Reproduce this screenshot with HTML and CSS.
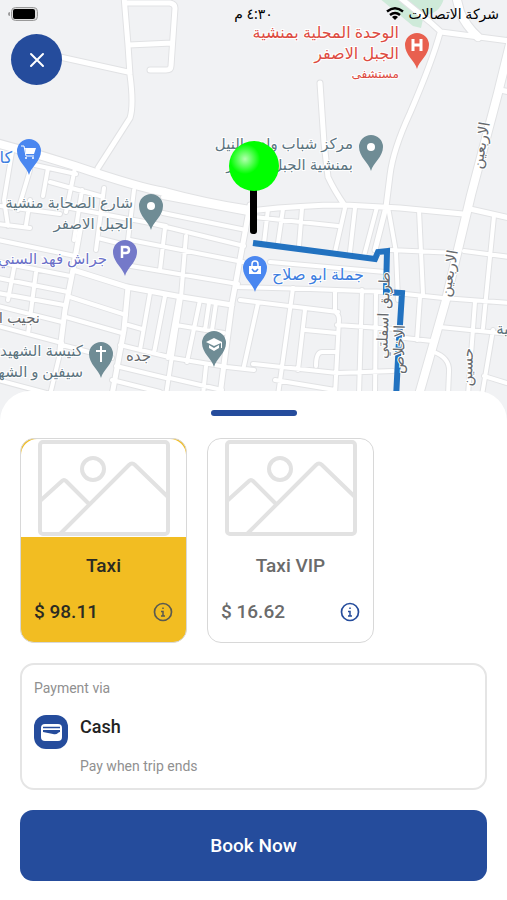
FILE: index.html
```html
<!DOCTYPE html>
<html lang="en">
<head>
    <meta charset="UTF-8">
    <meta name="viewport" content="width=device-width, initial-scale=1.0">
    <title>Book a taxi</title>
    <link rel="stylesheet" href="styles.css">
</head>

<body>
    <main class="screen">
        <section class="map">
            <svg class="map-canvas" viewBox="0 0 507 430" preserveAspectRatio="xMidYMin slice" role="img" aria-label="Map">
                <defs>
                    <path id="streets" d="M283 209L278 243M302 208L299 246M253 217L338 226M345 208L335 252M355 208L350 252M377 207L364 256
                        M388 207L396 252L398 300M419 210L423 294M390 250L456 253M464 251L510 257M494 216L483 328
                        M396 293L443 298L510 303M235 287L310 289L390 292M240 300L338 312M335 290L335 312Q339 314 339 320L335 395
                        M270 262L385 272M293 288L278 395M258 303L244 366M305 310L298 370M305 330L337 333M337 325L395 329
                        M362 290L359 395M376 292L375 395M253 364L337 373L393 371M275 380L335 390M316 366Q316 352 322 352L335 352
                        M420 297L417 340M396 337L432 341M440 327L510 334M475 302L468 395M434 352Q450 358 449 372L448 395M493 330L482 395M484 376L510 384
                        M163 197L248 213M163 213L246 230M150 223L244 246M130 240L243 262M125 265L238 284
                        M186 236L181 297L166 395M165 228L160 270M150 293L140 350M165 296L154 353M179 297L168 358M200 300L187 362
                        M209 303L205 330M216 303L212 330M128 325L142 329M176 325L224 333M120 345L173 358L227 367L254 370
                        M70 297L126 315M66 317L122 333M62 345L112 358M116 366L166 378M112 380L160 392M206 366L203 395M170 378L222 390
                        M-2 262L70 276M-2 278L68 292M-2 293L64 305M-2 326L62 343M36 272L28 334M14 268L8 300M-2 306L62 322M62 345L50 395M-2 380L50 394
                        M-2 224L30 228M-2 240L75 256M12 152L4 200L8 226M30 170L18 210M48 168L43 196M75 168L66 212M35 165L76 174M50 182L100 196
                        M30 200L26 225M60 206L166 226M82 190L74 240M104 188L96 250M134 190L128 240M98 238L130 246M0 206L60 214M268 209L264 243"/>
                    <path id="roads" d="M124 -4L128 45L130 75Q134 105 130 118L98 168M125 3L170 3Q175 4 175 8L171 66Q171 70 166 70L150 70M129 45L172 43
                        M60 57L128 72M320 83L324 143L328 177Q334 190 345 206M398 -4L430 22L441 32L510 41M440 33Q432 62 410 113Q393 150 390 175L386 207L375 250
                        M500 90L510 92M250 211Q300 205 345 205L400 208L463 214M470 209L510 218
                        M250 205L232 303L220 395M73 270L127 287L182 297L232 305M128 287L124 330L112 395M80 230L72 275L65 310L60 350"/>
                    <path id="avenues" d="M-4 143Q35 153 75 166Q140 188 165 192Q205 203 250 210M456 -4L460 12Q466 26 478 37M512 36L498 93L471 195L446 300L418 398"/>
                    <path id="pin" d="M0 24C-2 16 -12 10 -12 0A12 12 0 1 1 12 0C12 10 2 16 0 24Z"/>
                    <radialGradient id="ball" cx="0.32" cy="0.36" r="0.3">
                        <stop offset="0" stop-color="#b4ffb0"/>
                        <stop offset="1" stop-color="#00ff00"/>
                    </radialGradient>
                </defs>

                <!-- park -->
                <path class="park" d="M379 -2H444Q440 14 424 15L421 28L413 26Z"/>

                <!-- roads: the edges first, then the white fill -->
                <g class="edge">
                    <use href="#streets" stroke-width="6"/>
                    <use href="#roads" stroke-width="7"/>
                    <use href="#avenues" stroke-width="10"/>
                </g>
                <g class="fill">
                    <use href="#streets" stroke-width="4"/>
                    <use href="#roads" stroke-width="5"/>
                    <use href="#avenues" stroke-width="8"/>
                </g>

                <polyline class="route" points="253,243 375,259 378,252 387,251 386,292 402,293 399,340 396,398"/>

                <g class="label red">
                    <text x="399" y="38">الوحدة المحلية بمنشية</text>
                    <text x="399" y="59">الجبل الاصفر</text>
                    <text class="small" x="399" y="78">مستشفى</text>
                </g>
                <g class="label gray">
                    <text x="353" y="149">مركز شباب وادي النيل</text>
                    <text x="353" y="170">بمنشية الجبل الاصفر</text>
                    <text x="133" y="208">شارع الصحابة منشية</text>
                    <text x="133" y="229">الجبل الاصفر</text>
                    <text x="83" y="356">كنيسة الشهيد</text>
                    <text x="83" y="377">سيفين و الشهيد</text>
                    <text x="513" y="334">نية</text>
                </g>
                <g class="label blue">
                    <text x="12" y="163">كا</text>
                    <text x="364" y="280">جملة ابو صلاح</text>
                </g>
                <text class="label purple" x="107" y="264">جراش فهد السني</text>
                <g class="label street">
                    <text x="40" y="323">نجيب ا</text>
                    <text x="151" y="361">جده</text>
                    <text transform="translate(490 123) rotate(-80)">الاربعين</text>
                    <text transform="translate(458 251) rotate(-80)">الاربعين</text>
                    <text transform="translate(390 272) rotate(-88)">طريق اسفلتي</text>
                    <text transform="translate(405 325) rotate(-88)">الاخلاص</text>
                    <text transform="translate(473 348) rotate(-88)">حسين</text>
                </g>

                <g transform="translate(417 45)">
                    <use href="#pin" fill="#e8604f"/>
                    <path class="glyph" stroke-width="3" d="M-4 -6V6M4 -6V6M-4 0H4"/>
                </g>
                <g transform="translate(371 147)">
                    <use href="#pin" fill="#6f8c95"/>
                    <circle r="4" fill="#fff"/>
                </g>
                <g transform="translate(151 206)">
                    <use href="#pin" fill="#6f8c95"/>
                    <circle r="4" fill="#fff"/>
                </g>
                <g transform="translate(29 151)">
                    <use href="#pin" fill="#4a87f0"/>
                    <path d="M-4 -3H7L5 3H-3Z" fill="#fff"/>
                    <path class="glyph" stroke-width="1" d="M-8 -5H-5L-3 5H5"/>
                    <circle cx="-3" cy="7" r="1" fill="#fff"/>
                    <circle cx="4" cy="7" r="1" fill="#fff"/>
                </g>
                <g transform="translate(125 252)">
                    <use href="#pin" fill="#7479c9"/>
                    <path class="glyph" stroke-width="2.5" d="M-3 6V-5H1Q4 -5 4 -2T1 1H-3"/>
                </g>
                <g transform="translate(255 268)">
                    <use href="#pin" fill="#4a87f0"/>
                    <path d="M-6 -2H6V6H-6Z" fill="#fff"/>
                    <path class="glyph" stroke-width="1.5" d="M-3 -2V-4Q-3 -7 0 -7T3 -4V-2"/>
                    <path d="M-3 1Q0 6 3 1" fill="none" stroke="#4a87f0" stroke-width="1.5"/>
                </g>
                <g transform="translate(214 343)">
                    <use href="#pin" fill="#6f8c95"/>
                    <path d="M-8 -1L0 -5L8 -1V5H7V0L0 3ZM-5 2L0 5L5 2V5L0 8L-5 5Z" fill="#fff"/>
                </g>
                <g transform="translate(101 354)">
                    <use href="#pin" fill="#6f8c95"/>
                    <path class="glyph" stroke-width="2" d="M0 -8V8M-5 -3H5"/>
                </g>

                <!-- pickup marker -->
                <rect x="250" y="186" width="7" height="48" rx="3"/>
                <circle cx="254" cy="166" r="25" fill="url(#ball)"/>
            </svg>

            <header class="status-bar" dir="rtl" lang="ar">
                <span class="carrier">
                    شركة الاتصالات
                    <svg width="18" height="13" viewBox="0 0 18 13" aria-hidden="true">
                        <path d="M1 4.5Q9 -2 17 4.5M4 8Q9 3.800 14 8" fill="none" stroke="#000" stroke-width="2.400"/>
                        <path d="M6 10Q9 7.500 12 10L9 13Z"/>
                    </svg>
                </span>
                <span class="time">٤:٣٠ م</span>
                <span class="battery">
                    <svg width="30" height="14" viewBox="0 0 30 14" aria-hidden="true">
                        <rect x="3.500" y="0.500" width="26" height="13" rx="4" fill="#ddd" stroke="#999"/>
                        <rect x="5" y="2" width="22" height="10" rx="2"/>
                        <path d="M2 5V9Q0 9 0 7T2 5Z" fill="#999"/>
                    </svg>
                </span>
            </header>

            <button class="close" type="button" aria-label="Close">
                <svg width="16" height="16" viewBox="0 0 16 16" aria-hidden="true">
                    <path d="M2 2L14 14M14 2L2 14" stroke="#fff" stroke-width="2" stroke-linecap="round"/>
                </svg>
            </button>
        </section>

        <form class="sheet">
            <div class="handle"></div>

            <div class="cars">
                <div class="car selected">
                    <input class="car-radio" type="radio" name="car" id="taxi" checked>
                    <label class="car-label" for="taxi">
                        <span class="car-picture">
                            <svg width="132" height="98" viewBox="0 0 132 98" aria-hidden="true">
                                <rect x="2" y="3" width="128" height="92" rx="3"/>
                                <circle cx="55" cy="30" r="11"/>
                                <path d="M2 62L24 42Q26 40 28 42L51 65M22 95L91 26Q94 23 97 26L130 58"/>
                            </svg>
                        </span>
                        <span class="car-name">Taxi</span>
                    </label>
                    <div class="car-price">
                        <span>$ 98.11</span>
                        <button class="info" type="button" aria-label="About Taxi">
                            <svg width="20" height="20" viewBox="0 0 20 20" aria-hidden="true">
                                <circle cx="10" cy="10" r="8.500" stroke-width="1.700"/>
                                <path d="M8 9.500H10V14M8 14H12M10 5.500V7" stroke-width="1.500"/>
                            </svg>
                        </button>
                    </div>
                </div>

                <div class="car">
                    <input class="car-radio" type="radio" name="car" id="taxi-vip">
                    <label class="car-label" for="taxi-vip">
                        <span class="car-picture">
                            <svg width="132" height="98" viewBox="0 0 132 98" aria-hidden="true">
                                <rect x="2" y="3" width="128" height="92" rx="3"/>
                                <circle cx="55" cy="30" r="11"/>
                                <path d="M2 62L24 42Q26 40 28 42L51 65M22 95L91 26Q94 23 97 26L130 58"/>
                            </svg>
                        </span>
                        <span class="car-name">Taxi VIP</span>
                    </label>
                    <div class="car-price">
                        <span>$ 16.62</span>
                        <button class="info" type="button" aria-label="About Taxi VIP">
                            <svg width="20" height="20" viewBox="0 0 20 20" aria-hidden="true">
                                <circle cx="10" cy="10" r="8.500" stroke-width="1.700"/>
                                <path d="M8 9.500H10V14M8 14H12M10 5.500V7" stroke-width="1.500"/>
                            </svg>
                        </button>
                    </div>
                </div>
            </div>

            <section class="payment">
                <p class="payment-title">Payment via</p>
                <div class="payment-row">
                    <svg class="payment-icon" width="34" height="34" viewBox="0 0 34 34" aria-hidden="true">
                        <rect width="34" height="34" rx="12" fill="#254c9c"/>
                        <rect x="7" y="9" width="21" height="17" rx="4" fill="#fff"/>
                        <path d="M9 12.500H26" stroke="#254c9c" stroke-width="1.500"/>
                        <path d="M9 15H26V17Q25 17 24 18Q22 20 19 19L9 17Z" fill="#254c9c"/>
                    </svg>
                    <div>
                        <h2 class="payment-name">Cash</h2>
                        <p class="payment-note">Pay when trip ends</p>
                    </div>
                </div>
            </section>

            <button class="book" type="button">Book Now</button>
        </form>
    </main>
</body>
</html>
```

FILE: styles.css
```css
* {
    box-sizing: border-box;
}

body {
    margin: 0;
    font-family: Roboto, "Noto Sans", sans-serif;
    background-color: #fff;
}

.screen {
    position: relative;
}

/* map */
.map {
    height: 430px;
    background-color: #f1f2f4;
}

.map-canvas {
    display: block;
    width: 100%;
    height: 100%;
}

.park {
    fill: #ceead9;
}

.edge,
.fill {
    fill: none;
    stroke-linecap: round;
    stroke-linejoin: round;
}

.edge {
    stroke: #e1e2e4;
}

.fill {
    stroke: #fff;
}

.route {
    fill: none;
    stroke: #2272c0;
    stroke-width: 6px;
}

.glyph {
    fill: none;
    stroke: #fff;
}

.label {
    direction: rtl;
    font-family: "Noto Sans", "DejaVu Sans", sans-serif;
    font-size: 15px;
    paint-order: stroke;
    stroke: #fff;
    stroke-width: 2px;
}

.red {
    fill: #dd4b41;
    font-size: 16px;
}

.small {
    font-size: 12px;
}

.gray {
    fill: #5c7480;
}

.blue {
    fill: #3c7de0;
    font-size: 16px;
}

.purple {
    fill: #6a6fc8;
}

.street {
    fill: #66696d;
}

.status-bar {
    position: absolute;
    top: 0;
    left: 0;
    right: 0;
    display: grid;
    grid-template-columns: 1fr auto 1fr;
    align-items: center;
    height: 27px;
    padding: 0 8px;
    font-family: "Noto Sans", "DejaVu Sans", sans-serif;
    font-size: 14px;
}

.carrier {
    display: flex;
    align-items: center;
    gap: 4px;
}

.battery {
    display: flex;
    justify-content: flex-end;
}

.close {
    position: absolute;
    top: 34px;
    left: 11px;
    display: flex;
    align-items: center;
    justify-content: center;
    width: 51px;
    height: 51px;
    padding: 0;
    border: none;
    border-radius: 50%;
    background-color: #254c9c;
}

/* bottom sheet */
.sheet {
    position: relative;
    display: flex;
    flex-direction: column;
    gap: 20px;
    margin-top: -39px;
    padding: 19px 20px 20px;
    border-radius: 30px 30px 0 0;
    background-color: #fff;
}

.handle {
    align-self: center;
    width: 86px;
    height: 6px;
    margin-bottom: 2px;
    border-radius: 3px;
    background-color: #254c9c;
}

.cars {
    display: flex;
    gap: 20px;
}

.car {
    width: 167px;
    border: 1px solid #d8d8d8;
    border-radius: 14px;
    overflow: hidden;
    color: #6b6b6b;
}

.car-radio {
    position: absolute;
    opacity: 0;
}

.car-picture {
    display: flex;
    justify-content: center;
    height: 98px;
    border-radius: 16px 16px 0 0;
    background-color: #fff;
}

.car-picture svg {
    fill: none;
    stroke: #e2e2e2;
    stroke-width: 4px;
}

.car-name {
    display: block;
    padding-top: 16px;
    font-size: 19px;
    line-height: 26px;
    text-align: center;
}

.car-price {
    display: flex;
    align-items: center;
    justify-content: space-between;
    padding: 20px 13px 17px;
    font-size: 19px;
    line-height: 26px;
}

.selected {
    background-color: #f2bd22;
    color: #2b2b22;
}

.car-name,
.car-price {
    font-weight: 500;
}

.info {
    display: flex;
    padding: 0;
    border: none;
    background: none;
}

.info svg {
    fill: none;
    stroke: #254c9c;
}

.selected .info svg {
    stroke: #5a5a50;
}

.payment {
    padding: 13px 12px 12px;
    border: 2px solid #e5e5e5;
    border-radius: 14px;
}

.payment-title,
.payment-note {
    margin: 0;
    font-size: 14px;
    line-height: 20px;
    color: #909090;
}

.payment-row {
    display: flex;
    gap: 12px;
    margin-top: 17px;
}

.payment-name {
    margin: 0 0 17px;
    font-size: 18px;
    font-weight: 500;
    line-height: 24px;
    color: #222;
}

.book {
    height: 71px;
    border: none;
    border-radius: 13px;
    background-color: #254c9c;
    color: #fff;
    font-family: inherit;
    font-size: 19px;
    font-weight: 500;
}
```
